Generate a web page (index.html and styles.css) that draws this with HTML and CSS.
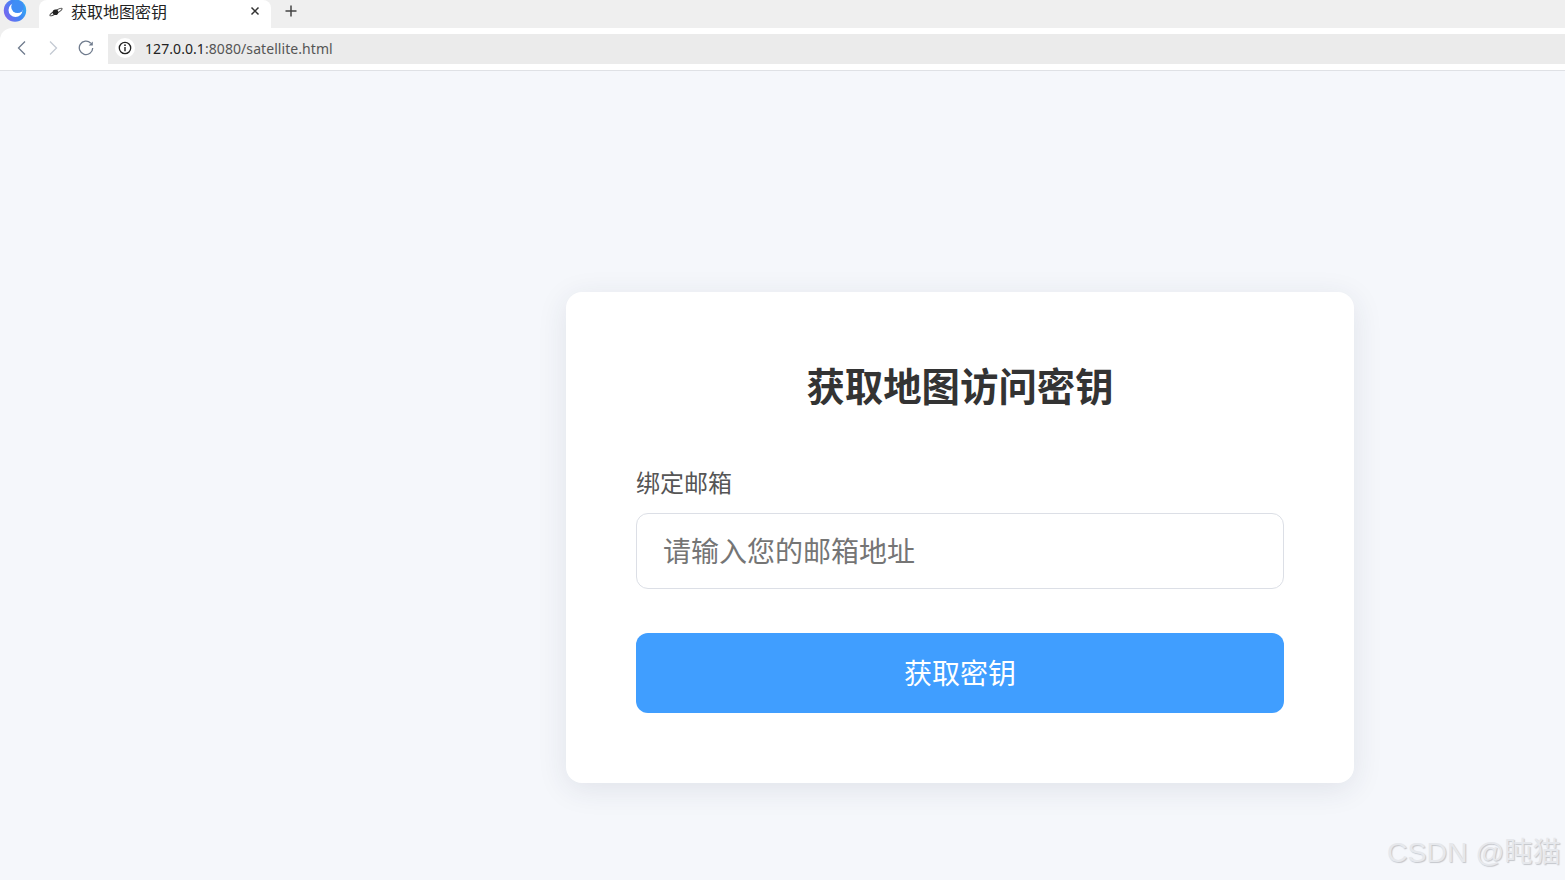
FILE: index.html
```html
<!DOCTYPE html>
<html lang="zh-CN">
<head>
<meta charset="utf-8">
<title>获取地图密钥</title>
<link rel="stylesheet" href="styles.css">
</head>
<body>
<header class="browser">
  <div class="tabstrip">
    <svg class="logo" width="26" height="24" viewBox="0 0 26 24">
      <defs><linearGradient id="lg" x1="0" y1="0.7" x2="1" y2="0.2"><stop offset="0" stop-color="#7a66ee"/><stop offset=".55" stop-color="#3f86f5"/><stop offset="1" stop-color="#35b0f2"/></linearGradient></defs>
      <circle cx="13" cy="10.500" r="11.200" fill="url(#lg)"/>
      <circle cx="13.500" cy="10" r="7" fill="#fff"/>
      <circle cx="15.500" cy="6.800" r="6.300" fill="#3f8df5"/>
    </svg>
    <div class="tab">
      <svg class="favicon" width="16" height="16" viewBox="0 0 16 16">
        <ellipse cx="8" cy="8" rx="7" ry="1.500" transform="rotate(-30 8 8)" fill="none" stroke="#444" stroke-width="1"/>
        <circle cx="7.500" cy="8.300" r="2.800" fill="#222"/>
      </svg>
      <span class="tab-title">获取地图密钥</span>
      <svg class="tab-close" width="10" height="10" viewBox="0 0 10 10"><path d="M1.500 1.500L8.500 8.500M8.500 1.500L1.500 8.500" stroke="#333" stroke-width="1.500"/></svg>
    </div>
    <svg class="new-tab" width="12" height="12" viewBox="0 0 12 12"><path d="M6 .5V11.500M.5 6H11.500" stroke="#444" stroke-width="1.500"/></svg>
  </div>
  <div class="toolbar">
    <svg class="nav" width="12" height="16" viewBox="0 0 12 16"><path d="M9 1.500L2.500 8L9 14.500" fill="none" stroke="#6f7b8d" stroke-width="1.300"/></svg>
    <svg class="nav" width="12" height="16" viewBox="0 0 12 16"><path d="M3 1.500L9.500 8L3 14.500" fill="none" stroke="#c4cad3" stroke-width="1.300"/></svg>
    <svg class="nav reload" width="16" height="16" viewBox="0 0 16 16"><path d="M12.800 3.200A6.700 6.700 0 1 0 14.700 8" fill="none" stroke="#6f7b8d" stroke-width="1.300"/><path d="M14.800 1.500V5.600H10.700Z" fill="#6f7b8d"/></svg>
    <div class="address">
      <span class="info"><svg width="14" height="14" viewBox="0 0 14 14"><circle cx="7" cy="7" r="5.700" fill="none" stroke="#222" stroke-width="1.300"/><path d="M7 6V10.200" stroke="#222" stroke-width="1.400"/><circle cx="7" cy="4.200" r=".9" fill="#222"/></svg></span>
      <span class="url"><span class="host">127.0.0.1</span>:8080/satellite.html</span>
    </div>
  </div>
</header>
<main class="page">
  <section class="card">
    <h1 class="title">获取地图访问密钥</h1>
    <label class="label" for="email">绑定邮箱</label>
    <input class="input" id="email" type="email" placeholder="请输入您的邮箱地址">
    <button class="submit" type="button">获取密钥</button>
  </section>
</main>
<div class="watermark">CSDN @盹猫</div>
</body>
</html>
```
FILE: styles.css
```css
* { box-sizing: border-box; }
html, body { margin: 0; height: 100%; }
body {
  height: 880px;
  overflow: hidden;
  background: #f5f7fb;
  font-family: "Noto Sans", "Noto Sans CJK SC", sans-serif;
  display: flex;
  flex-direction: column;
}
.browser { flex: none; background: #efefef; }
.tabstrip { height: 28px; display: flex; align-items: flex-start; overflow: hidden; }
.logo { margin: 0 0 0 2px; flex: none; }
.tab {
  width: 232px;
  height: 28px;
  margin-left: 11px;
  background: #fff;
  border-radius: 8px 8px 0 0;
  display: flex;
  align-items: center;
  padding: 0 11px 4px 9px;
}
.favicon { flex: none; }
.tab-title { margin-left: 7px; margin-top: -2px; font-size: 16px; line-height: 24px; color: #222; flex: 1; font-family: "Noto Sans CJK SC", sans-serif; }
.tab-close { flex: none; margin-top: -2px; }
.new-tab { margin: 5px 0 0 14px; flex: none; }
.toolbar {
  height: 43px;
  background: #fff;
  border-bottom: 1px solid #dfe1e5;
  border-radius: 12px 0 0 0;
  display: flex;
  align-items: center;
  padding-left: 16px;
}
.nav { flex: none; margin: 0 19px 2px 0; }
.nav.reload { margin-right: 14px; }
.address {
  flex: 1;
  height: 30px;
  background: #ebebeb;
  display: flex;
  align-items: center;
  padding: 0 0 2px 7px;
}
.info {
  width: 20px;
  height: 20px;
  border-radius: 50%;
  background: #fff;
  display: flex;
  align-items: center;
  justify-content: center;
}
.url { margin-left: 10px; font-size: 14px; color: #555; letter-spacing: .07px; }
.host { color: #222; }
.page {
  flex: 1;
  display: flex;
  align-items: flex-start;
  padding: 221px 0 0 566px;
}
.card {
  width: 788px;
  height: 491px;
  background: #fff;
  border-radius: 16px;
  box-shadow: 0 6px 30px rgba(40, 50, 80, .1);
  padding: 70px;
  display: flex;
  flex-direction: column;
}
.title {
  margin: 0 0 58px;
  text-align: center;
  font-size: 38.4px;
  line-height: 44px;
  font-weight: 700;
  color: #333;
  font-family: "Noto Sans CJK SC", sans-serif;
}
.label {
  font-size: 24px;
  line-height: 36px;
  color: #555;
  margin-bottom: 13px;
  font-family: "Noto Sans CJK SC", sans-serif;
}
.input {
  width: 648px;
  height: 76px;
  padding: 0 26px 2px;
  border: 1px solid #dcdfe6;
  border-radius: 12px;
  background: #fff;
  font-size: 28px;
  font-family: "Noto Sans CJK SC", sans-serif;
  outline: none;
}
.input::placeholder { color: #757575; opacity: 1; }
.submit {
  width: 648px;
  height: 80px;
  margin-top: 44px;
  border: 0;
  border-radius: 12px;
  background: #409eff;
  color: #fff;
  font-size: 28px;
  font-family: "Noto Sans CJK SC", sans-serif;
  padding: 0 0 2px;
}
.watermark {
  position: absolute;
  right: 4px;
  top: 830px;
  font-size: 28.4px;
  line-height: 44px;
  color: #e6e8ec;
  text-shadow: 1px 1px 1px #c4c6cb;
  font-family: "Liberation Sans", "Noto Sans CJK SC", sans-serif;
  white-space: nowrap;
}
```
